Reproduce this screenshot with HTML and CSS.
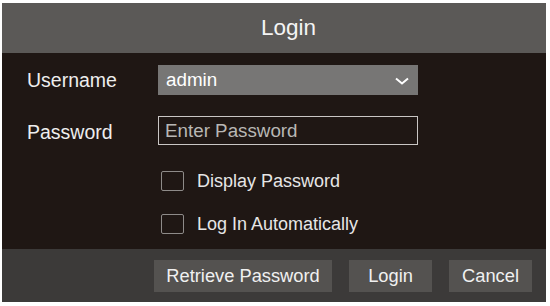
FILE: index.html
```html
<!DOCTYPE html>
<html lang="en">
  <head>
    <meta charset="UTF-8" />
    <title>Login</title>
    <link rel="stylesheet" href="styles.css">
  </head>
  <body>
    <div class="dialog">
      <div class="header">Login</div>
      <div class="content">
        <div class="row rowUser">
          <label class="label">Username</label>
          <div class="select">
            <span>admin</span>
            <svg class="chevron" width="14" height="8" viewBox="0 0 14 8">
              <path d="M1 1.5 L7 6.5 L13 1.5" fill="none" stroke="#fff" stroke-width="2" />
            </svg>
          </div>
        </div>
        <div class="row rowPass">
          <label class="label">Password</label>
          <div class="input">Enter Password</div>
        </div>
        <div class="row rowCheck first">
          <span class="box"></span>
          <span class="checkText">Display Password</span>
        </div>
        <div class="row rowCheck second">
          <span class="box"></span>
          <span class="checkText">Log In Automatically</span>
        </div>
      </div>
      <div class="footer">
        <button class="btn wide">Retrieve Password</button>
        <button class="btn">Login</button>
        <button class="btn">Cancel</button>
      </div>
    </div>
  </body>
</html>
```

FILE: styles.css
```css
body {
  margin: 0;
  background-color: #fff;
  font-family: "Liberation Sans", Arial, sans-serif;
}
.dialog {
  width: 544px;
  margin: 3px 0 0 2px;
  background-color: #1f1714;
}
.header {
  height: 50px;
  line-height: 50px;
  background-color: #5b5957;
  color: #f4f4f4;
  font-size: 22.5px;
  text-align: center;
  padding-left: 29px;
  box-sizing: border-box;
}
.content {
  height: 196px;
  padding: 12px 0 0 25px;
  box-sizing: border-box;
}
.row {
  display: flex;
  align-items: center;
}
.label {
  width: 131px;
  color: #eee;
  font-size: 19.5px;
}
.rowUser {
  height: 30px;
}
.select {
  width: 260px;
  height: 30px;
  background-color: #777675;
  display: flex;
  align-items: center;
  justify-content: space-between;
  padding: 0 9px 0 8px;
  box-sizing: border-box;
  color: #fff;
  font-size: 18.8px;
}
.chevron {
  margin-top: 1px;
}
.rowPass {
  margin-top: 21px;
  height: 29px;
}
.rowPass .label {
  padding-top: 3px;
}
.input {
  width: 260px;
  height: 29px;
  border: 1px solid #c9c6c4;
  box-sizing: border-box;
  color: #b9b7b5;
  font-size: 18.8px;
  line-height: 27px;
  padding-left: 6px;
}
.rowCheck {
  padding-left: 134px;
  height: 20px;
}
.first {
  margin-top: 26px;
}
.second {
  margin-top: 23px;
}
.box {
  width: 23px;
  height: 20px;
  border: 1px solid #8e8b89;
  border-radius: 2px;
  box-sizing: border-box;
}
.checkText {
  margin-left: 13px;
  color: #e6e6e6;
  font-size: 18px;
}
.footer {
  height: 53px;
  background-color: #3c3a39;
  display: flex;
  justify-content: flex-end;
  align-items: flex-start;
  gap: 17px;
  padding: 11px 14px 0 0;
  box-sizing: border-box;
}
.btn {
  width: 83px;
  height: 32px;
  border: none;
  background-color: #545250;
  color: #f0f0f0;
  font-family: "Liberation Sans", Arial, sans-serif;
  font-size: 18.3px;
  padding: 0;
  cursor: pointer;
}
.wide {
  width: 178px;
}
```
